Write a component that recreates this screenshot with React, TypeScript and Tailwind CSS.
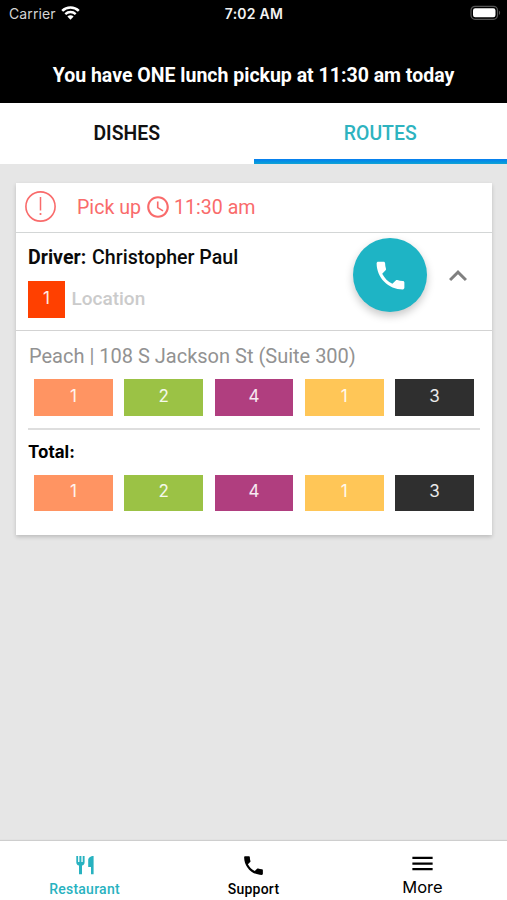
import clsx from "clsx";
import { MdAccessTime, MdExpandLess, MdMenu, MdPhone } from "react-icons/md";

const counts = [
  { color: "bg-[#ff9462]", value: 1 },
  { color: "bg-[#9bc245]", value: 2 },
  { color: "bg-[#b03e7f]", value: 4 },
  { color: "bg-[#ffc657]", value: 1 },
  { color: "bg-[#2f2f2f]", value: 3 },
];

function StatusBar() {
  return (
    <div className="grid h-[27px] grid-cols-3 items-center pr-[6px] pl-[9px] font-[Inter,sans-serif] text-white">
      <div className="flex items-center gap-[5px]">
        <span className="text-[14px] tracking-[0.1px] text-[#d4d4d4]">Carrier</span>
        <svg className="-mt-[2px]" width="19" height="14" viewBox="0 0 19 14" fill="none" stroke="white" aria-hidden="true">
          <path d="M1.2 4.9C5.9 .4 13.1 .4 17.8 4.9" strokeWidth="2.6" />
          <path d="M4.3 8.1C7.3 5.3 11.7 5.3 14.7 8.1" strokeWidth="2.4" />
          <path d="M9.5 13.7 6.4 10.5C8.2 8.9 10.8 8.9 12.6 10.5Z" fill="white" stroke="none" />
        </svg>
      </div>
      <span className="-ml-[2px] text-center text-[14px] font-semibold tracking-[0.25px] text-[#f2f2f2]">7:02 AM</span>
      <svg className="-mt-[1px] justify-self-end" width="31" height="16" viewBox="0 0 31 16" aria-hidden="true">
        <rect x="1" y="1.3" width="26.5" height="13" rx="4" fill="none" stroke="#555" strokeWidth="1.2" />
        <rect x="3" y="3.3" width="22.5" height="9" rx="2.2" fill="white" />
        <path d="M29 5.7c1.5.6 1.5 3.6 0 4.2Z" fill="#555" />
      </svg>
    </div>
  );
}

function RestaurantIcon() {
  return (
    <svg width="22" height="22" viewBox="0 0 22 22" fill="currentColor" aria-hidden="true">
      <path d="M2.3 2h1.8v6h1.3V2h2v6h1.3V2h1.9v6.2c0 1.8-1.1 3-2.6 3.3v8.7H5V11.500C3.400 11.200 2.300 10 2.300 8.200Z" />
      <path d="M19.600 2v18.200h-2.600v-7.200h-2.800V6.200C14.200 3.800 16.500 2 19.600 2Z" />
    </svg>
  );
}

function CountRow() {
  return (
    <div className="flex gap-[11.6px] px-[6px]">
      {counts.map((count, index) => (
        <div
          key={index}
          className={clsx(
            "flex h-[36.7px] flex-1 items-center justify-center pb-[2px] font-[Inter,sans-serif] text-[17px] text-white/90",
            count.color,
          )}
        >
          {count.value}
        </div>
      ))}
    </div>
  );
}

function RouteCard() {
  return (
    <article className="mt-[19px] mr-[15px] ml-[16px] h-[352px] bg-white shadow-[0_2px_4px_rgba(0,0,0,0.18)]">
      <div className="flex h-[50px] items-center border-b-[1.5px] border-[#d3d6d6] pb-[2px] pl-[9px] text-[#f96b6b]">
        <svg width="31" height="31" viewBox="0 0 31 31" fill="none" stroke="currentColor" aria-hidden="true">
          <circle cx="15.5" cy="15.5" r="14.6" strokeWidth="1.6" />
          <path d="M15.5 6v13.500" strokeWidth="1.5" />
          <circle cx="15.5" cy="23" r="1.1" fill="currentColor" stroke="none" />
        </svg>
        <p className="mt-[2px] ml-[21px] flex items-center text-[19.6px]">
          Pick up
          <MdAccessTime size={26} className="mr-[3px] ml-[4px]" aria-hidden="true" />
          11:30 am
        </p>
      </div>

      <div className="flex h-[98px] border-b-[1.5px] border-[#d3d3d3] pr-[16px] pl-[12px]">
        <div className="flex-1 pt-[12px]">
          <p className="text-[19.6px] leading-[26px] font-medium text-[#0b0b0b]">
            <span className="mr-[1px] font-bold">Driver:</span> Christopher Paul
          </p>
          <div className="mt-[10px] flex items-center">
            <span className="flex h-[37px] w-[37px] items-center justify-center bg-[#ff4000] pb-[2px] font-[Inter,sans-serif] text-[17px] text-white/90">
              1
            </span>
            <span className="ml-[6.5px] text-[19px] font-medium text-[#cbcbcb]">Location</span>
          </div>
        </div>
        <button
          type="button"
          aria-label="Call driver"
          className="mt-[5px] flex h-[74px] w-[74px] items-center justify-center rounded-full bg-[#1eb4c5] text-white shadow-[0_4px_8px_rgba(0,0,0,0.22)]"
        >
          <MdPhone size={37} />
        </button>
        <button type="button" aria-label="Collapse route" className="mt-[25px] ml-[13px] h-[36px] w-[36px] text-[#808080]">
          <MdExpandLess size={36} />
        </button>
      </div>

      <div className="px-[12px] pt-[12px]">
        <p className="h-[26px] pl-[1px] text-[20px] leading-[26px] text-[#929292]">
          Peach | 108 S Jackson St (Suite 300)
        </p>
        <div className="mt-[10px]">
          <CountRow />
        </div>
        <div className="mt-[12px] h-[2px] bg-[#dedede]" />
        <p className="mt-[10px] mb-[10px] h-[25px] font-[Inter,sans-serif] text-[17px] leading-[25px] font-bold text-black">
          Total:
        </p>
        <CountRow />
      </div>
    </article>
  );
}

export default function App() {
  return (
    <div className="flex h-[900px] w-[507px] flex-col overflow-hidden bg-[#e6e6e6] font-[Roboto,sans-serif]">
      <header className="h-[103px] shrink-0 bg-black">
        <StatusBar />
        <h1 className="mt-[36px] text-center text-[19.5px] leading-[26px] font-bold whitespace-nowrap text-white">
          You have ONE lunch pickup at 11:30 am today
        </h1>
      </header>

      <nav className="grid h-[61px] shrink-0 grid-cols-2 bg-white text-[19.4px]">
        <button type="button" className="pt-[1px] font-semibold text-[#111]">
          DISHES
        </button>
        <button type="button" className="flex flex-col font-medium text-[#2eb3bf]">
          <span className="flex w-full flex-1 items-center justify-center pt-[6px]">ROUTES</span>
          <span className="h-[5px] w-full bg-linear-to-b from-[#0a7df0] to-[#12a3d4]" />
        </button>
      </nav>

      <main className="flex-1">
        <RouteCard />
      </main>

      <nav className="grid h-[59px] shrink-0 grid-cols-3 bg-white text-[14px] leading-[18px] font-medium text-black shadow-[0_-1px_1px_rgba(0,0,0,0.1)]">
        <button type="button" className="flex flex-col items-center pt-[13px] text-[#28b2c0]">
          <RestaurantIcon />
          <span className="mt-[4px] tracking-[0.25px]">Restaurant</span>
        </button>
        <button type="button" className="flex flex-col items-center pt-[12px]">
          <MdPhone size={25} />
          <span className="mt-[2px] tracking-[0.25px]">Support</span>
        </button>
        <button type="button" className="flex flex-col items-center pt-[9px]">
          <MdMenu size={27} />
          <span className="mt-[1px] font-[Inter,sans-serif] text-[16.5px] font-normal">More</span>
        </button>
      </nav>
    </div>
  );
}
